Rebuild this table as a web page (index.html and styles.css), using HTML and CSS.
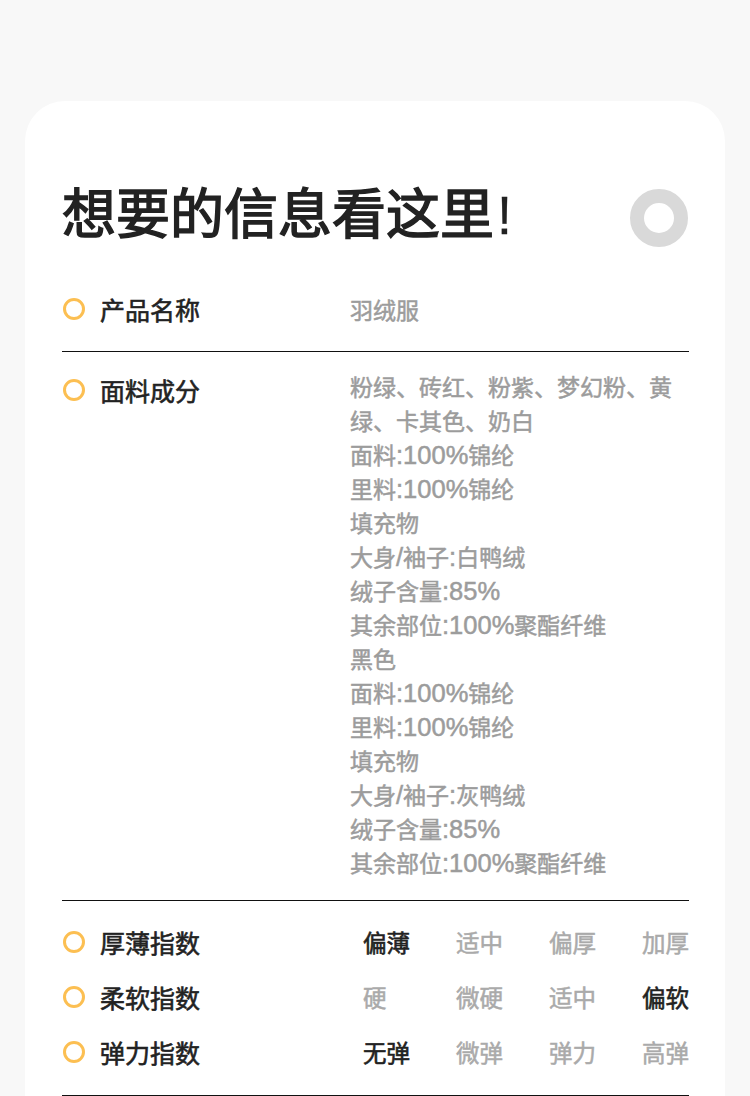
FILE: index.html
```html
<!DOCTYPE html>
<html lang="zh">
<head>
<meta charset="utf-8">
<title>想要的信息看这里</title>
<link rel="stylesheet" href="styles.css">
</head>
<body>
<div class="page">
  <div class="card">
    <div class="head">
      <h1 class="title">想要的信息看这里<span class="bang">!</span></h1>
      <span class="ring"></span>
    </div>

    <div class="row row-name">
      <div class="label"><span class="dot"></span>产品名称</div>
      <div class="value">羽绒服</div>
    </div>

    <div class="row row-fabric">
      <div class="label label-low"><span class="dot"></span>面料成分</div>
      <div class="value">
        粉绿、砖红、粉紫、梦幻粉、黄绿、卡其色、奶白<br>
        面料<span class="num">:100%</span>锦纶<br>
        里料<span class="num">:100%</span>锦纶<br>
        填充物<br>
        大身<span class="num">/</span>袖子<span class="num">:</span>白鸭绒<br>
        绒子含量<span class="num">:85%</span><br>
        其余部位<span class="num">:100%</span>聚酯纤维<br>
        黑色<br>
        面料<span class="num">:100%</span>锦纶<br>
        里料<span class="num">:100%</span>锦纶<br>
        填充物<br>
        大身<span class="num">/</span>袖子<span class="num">:</span>灰鸭绒<br>
        绒子含量<span class="num">:85%</span><br>
        其余部位<span class="num">:100%</span>聚酯纤维
      </div>
    </div>

    <div class="indexes">
      <div class="irow">
        <div class="label"><span class="dot"></span>厚薄指数</div>
        <div class="opts">
          <span class="opt on">偏薄</span>
          <span class="opt">适中</span>
          <span class="opt">偏厚</span>
          <span class="opt">加厚</span>
        </div>
      </div>
      <div class="irow">
        <div class="label"><span class="dot"></span>柔软指数</div>
        <div class="opts">
          <span class="opt">硬</span>
          <span class="opt">微硬</span>
          <span class="opt">适中</span>
          <span class="opt on">偏软</span>
        </div>
      </div>
      <div class="irow">
        <div class="label"><span class="dot"></span>弹力指数</div>
        <div class="opts">
          <span class="opt on">无弹</span>
          <span class="opt">微弹</span>
          <span class="opt">弹力</span>
          <span class="opt">高弹</span>
        </div>
      </div>
    </div>
  </div>
</div>
</body>
</html>
```

FILE: styles.css
```css
* { box-sizing: border-box; }
html, body {
  margin: 0;
  padding: 0;
  background: #f8f8f8;
  font-family: "Liberation Sans", "Noto Sans CJK SC", sans-serif;
  overflow: hidden;
}
.page {
  padding: 101px 25px 0;
}
.card {
  background: #fff;
  border-radius: 40px 40px 0 0;
  padding: 78px 36px 40px 37px;
  min-height: 1100px;
}
.head {
  display: flex;
  justify-content: space-between;
  align-items: center;
}
.title {
  margin: 0;
  font-size: 54px;
  line-height: 54px;
  font-weight: 400;
  color: #222;
  font-family: "Noto Sans CJK SC", sans-serif;
}
.title-text,
.title {
  -webkit-text-stroke-width: 1.5px;
  -webkit-text-stroke-color: #222;
}
.bang {
  font-family: "Liberation Sans", sans-serif;
  font-weight: 400;
  margin-left: 3px;
  -webkit-text-stroke-width: 0.3px;
}
.ring {
  width: 58px;
  height: 58px;
  border-radius: 50%;
  border: 14px solid #d9d9d9;
  margin-top: 10px;
  margin-right: 1px;
}
.row {
  display: grid;
  grid-template-columns: 288px 1fr;
  border-bottom: 1px solid #111;
}
.row-name {
  margin-top: 45px;
  padding-bottom: 25px;
}
.row-fabric {
  padding: 17px 0 21px;
}
.label {
  display: flex;
  align-items: center;
  gap: 15px;
  font-size: 25px;
  line-height: 34px;
  height: 34px;
  font-weight: 400;
  color: #222;
  -webkit-text-stroke: 0.6px #222;
  font-family: "Noto Sans CJK SC", sans-serif;
}
.label-low {
  margin-top: 4px;
}
.dot {
  width: 22px;
  height: 22px;
  border-radius: 50%;
  border: 3px solid #fcbf52;
  flex: none;
  margin-left: 1px;
}
.value {
  font-size: 23px;
  line-height: 34px;
  font-weight: 400;
  color: #9c9c9c;
  -webkit-text-stroke: 0.5px #9c9c9c;
  font-family: "Noto Sans CJK SC", sans-serif;
}
.num {
  font-family: "Liberation Sans", sans-serif;
  font-size: 25.5px;
  font-weight: 400;
  line-height: 1;
}
.indexes {
  padding: 13px 0 16px;
  border-bottom: 1px solid #111;
}
.irow {
  display: grid;
  grid-template-columns: 301px 1fr;
  align-items: center;
  height: 55px;
}
.opts {
  display: grid;
  grid-template-columns: repeat(4, 47px);
  justify-content: space-between;
  font-family: "Noto Sans CJK SC", sans-serif;
  font-size: 23.5px;
  line-height: 34px;
  font-weight: 400;
}
.opt {
  color: #aaa;
  white-space: nowrap;
  -webkit-text-stroke: 0.5px #aaa;
}
.opt.on {
  color: #222;
  -webkit-text-stroke: 0.6px #222;
}
```
